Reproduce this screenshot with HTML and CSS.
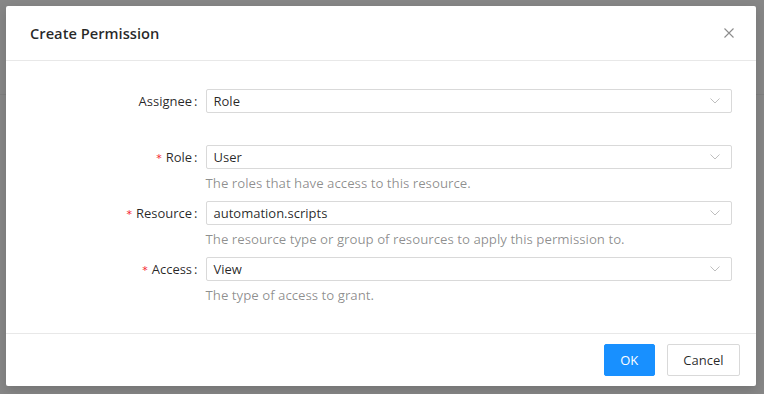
FILE: index.html
```html
<!DOCTYPE html>
<html>
<head>
<meta charset="utf-8">
<link rel="stylesheet" href="styles.css">
</head>
<body>
<div class="page">
  <div class="page-header"></div>
</div>
<div class="overlay">
  <div class="modal">
    <div class="modal-header">
      <div class="modal-title">Create Permission</div>
      <button class="modal-close" aria-label="Close">
        <svg width="10" height="10" viewBox="0 0 10 10"><path d="M0.5 0.5 L9.5 9.5 M9.5 0.5 L0.5 9.5" stroke="#8c8c8c" stroke-width="1.1" fill="none"/></svg>
      </button>
    </div>
    <div class="modal-body">
      <form class="form">
        <div class="form-item">
          <div class="form-label"><label>Assignee</label></div>
          <div class="form-control">
            <div class="control-row">
              <div class="select"><span class="select-value">Role</span><span class="chevron"><svg width="10" height="6" viewBox="0 0 10 6"><path d="M0.5 0.5 L5 5 L9.5 0.5" stroke="#bfbfbf" stroke-width="1" fill="none"/></svg></span></div>
            </div>
          </div>
        </div>
        <div class="form-item with-help">
          <div class="form-label"><label class="required">Role</label></div>
          <div class="form-control">
            <div class="control-row">
              <div class="select"><span class="select-value">User</span><span class="chevron"><svg width="10" height="6" viewBox="0 0 10 6"><path d="M0.5 0.5 L5 5 L9.5 0.5" stroke="#bfbfbf" stroke-width="1" fill="none"/></svg></span></div>
            </div>
            <div class="help">The roles that have access to this resource.</div>
          </div>
        </div>
        <div class="form-item with-help">
          <div class="form-label"><label class="required">Resource</label></div>
          <div class="form-control">
            <div class="control-row">
              <div class="select"><span class="select-value">automation.scripts</span><span class="chevron"><svg width="10" height="6" viewBox="0 0 10 6"><path d="M0.5 0.5 L5 5 L9.5 0.5" stroke="#bfbfbf" stroke-width="1" fill="none"/></svg></span></div>
            </div>
            <div class="help">The resource type or group of resources to apply this permission to.</div>
          </div>
        </div>
        <div class="form-item with-help">
          <div class="form-label"><label class="required">Access</label></div>
          <div class="form-control">
            <div class="control-row">
              <div class="select"><span class="select-value">View</span><span class="chevron"><svg width="10" height="6" viewBox="0 0 10 6"><path d="M0.5 0.5 L5 5 L9.5 0.5" stroke="#bfbfbf" stroke-width="1" fill="none"/></svg></span></div>
            </div>
            <div class="help">The type of access to grant.</div>
          </div>
        </div>
      </form>
    </div>
    <div class="modal-footer">
      <button class="btn btn-primary">OK</button>
      <button class="btn">Cancel</button>
    </div>
  </div>
</div>
</body>
</html>
```
FILE: styles.css
```css
* { box-sizing: border-box; }
html, body {
  margin: 0;
  padding: 0;
  width: 764px;
  height: 394px;
  overflow: hidden;
  font-family: "Open Sans", "Noto Sans", sans-serif;
  font-size: 13px;
  color: rgba(0,0,0,0.85);
}
body { position: relative; background: #fff; }
.page { height: 394px; }
.page-header { height: 95px; border-bottom: 1px solid #f0f0f0; }
.overlay {
  position: absolute;
  inset: 0;
  background: rgba(0,0,0,0.47);
  padding: 6px;
}
.modal {
  width: 750px;
  height: 380px;
  background: #fff;
  border-radius: 2px;
  box-shadow: 0 4px 12px rgba(0,0,0,0.15);
  display: flex;
  flex-direction: column;
}
.modal-header {
  height: 55px;
  padding: 16px 24px;
  border-bottom: 1px solid #e8e8e8;
  display: flex;
  align-items: center;
  justify-content: space-between;
}
.modal-title {
  font-size: 14.7px;
  font-weight: 600;
  line-height: 22px;
  color: rgba(0,0,0,0.85);
}
.modal-close {
  border: 0;
  background: none;
  padding: 0;
  margin-right: -2px;
  width: 10px;
  height: 10px;
  display: flex;
}
.modal-body {
  padding: 24px;
  flex: 1;
}
.form { display: flex; flex-direction: column; }
.form-item {
  display: flex;
  margin-bottom: 24px;
}
.form-item.with-help { margin-bottom: 3px; }
.form-item:last-child { margin-bottom: 0; }
.form-label {
  width: 25%;
  flex: none;
  text-align: right;
  line-height: 32px;
  height: 32px;
  white-space: nowrap;
}
.form-label label::after {
  content: ":";
  margin: 0 8px 0 2px;
}
.form-label label.required::before {
  content: "*";
  color: #f5222d;
  margin-right: 4px;
  font-family: "DejaVu Sans", sans-serif;
  font-size: 11px;
}
.form-control { flex: 1; min-width: 0; }
.control-row {
  height: 32px;
  display: flex;
  align-items: center;
}
.select {
  width: 100%;
  height: 24px;
  border: 1px solid #d9d9d9;
  border-radius: 2px;
  display: flex;
  align-items: center;
  justify-content: space-between;
  padding: 0 11px 0 7px;
}
.select-value { line-height: 22px; }
.chevron { display: flex; }
.help {
  margin-top: -1px;
  line-height: 22px;
  height: 22px;
  font-size: 13.25px;
  color: rgba(0,0,0,0.45);
}
.modal-footer {
  border-top: 1px solid #e8e8e8;
  padding: 10px 16px;
  display: flex;
  justify-content: flex-end;
  gap: 12px;
}
.btn {
  height: 32px;
  padding: 0 15.5px;
  font-family: inherit;
  font-size: 13px;
  border: 1px solid #d9d9d9;
  background: #fff;
  border-radius: 2px;
  color: rgba(0,0,0,0.85);
}
.btn-primary {
  background: #1890ff;
  border-color: #1890ff;
  color: #fff;
}
```
